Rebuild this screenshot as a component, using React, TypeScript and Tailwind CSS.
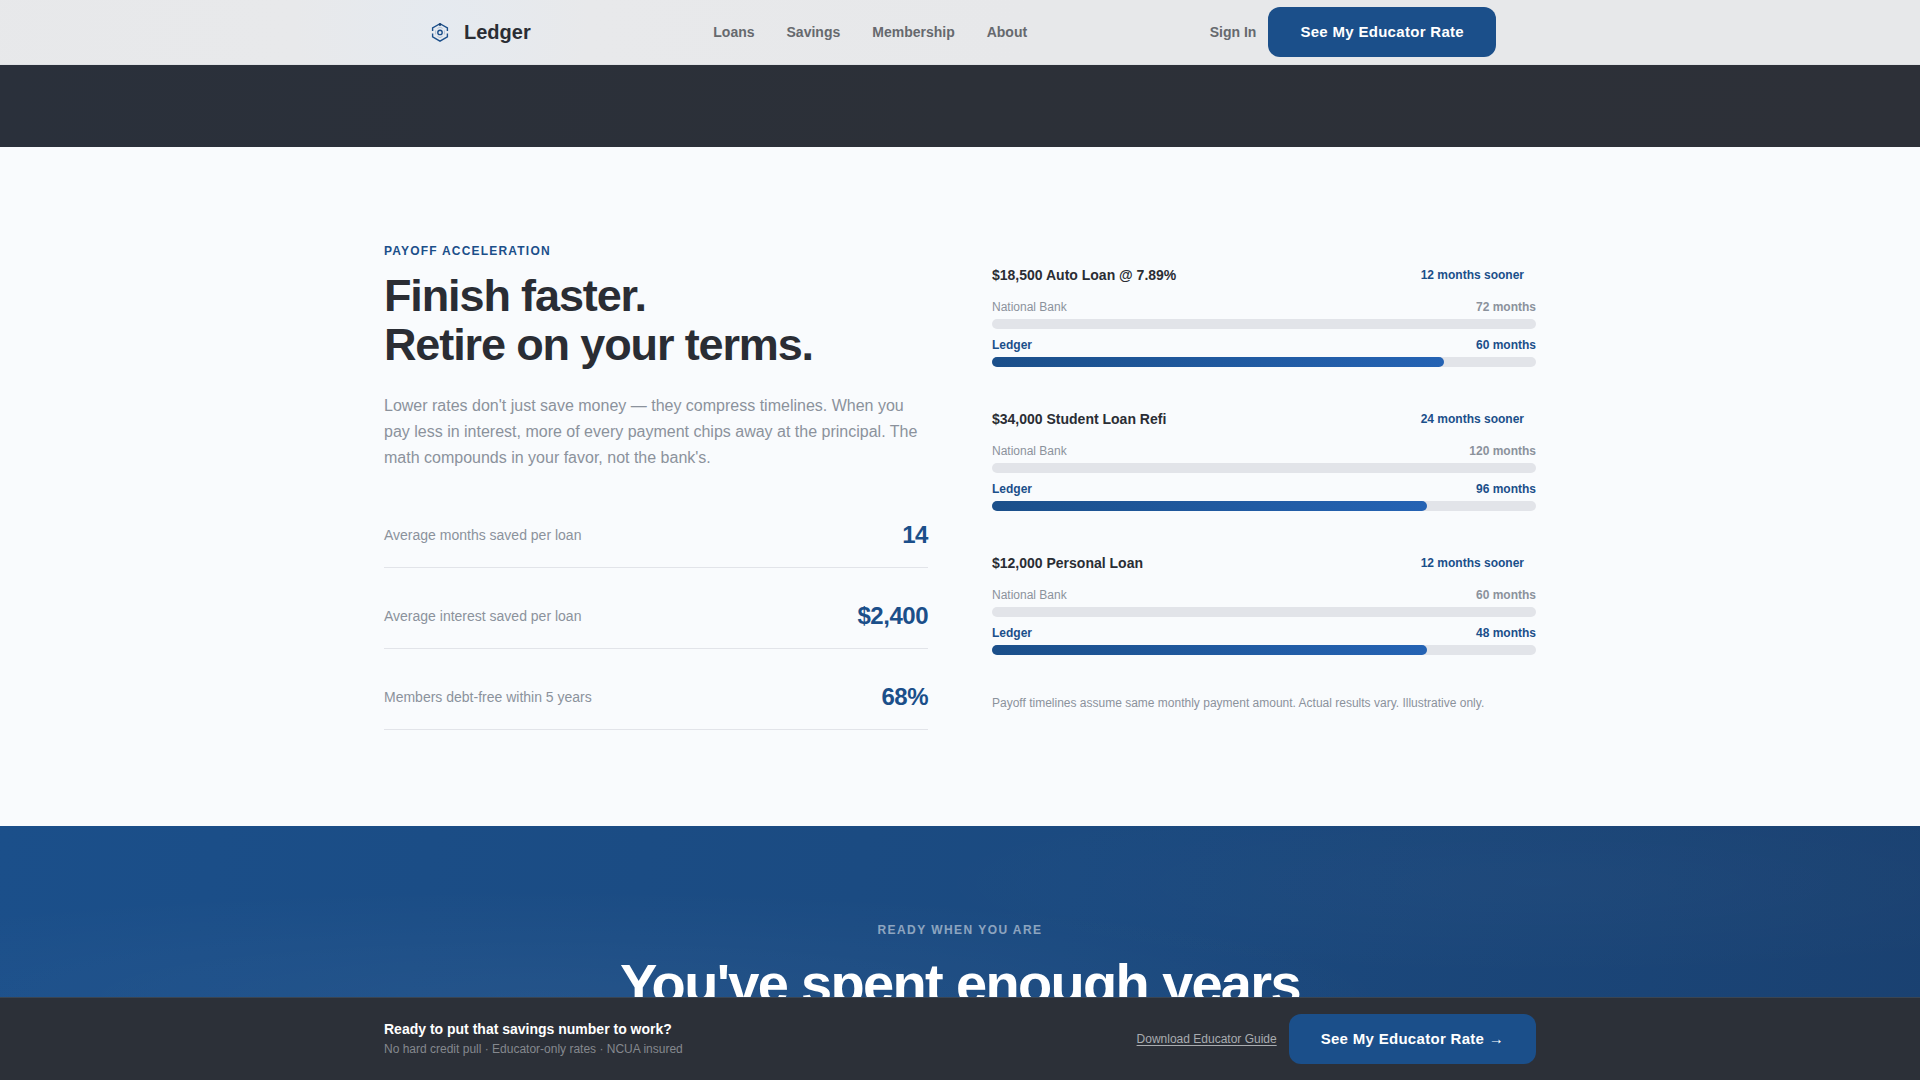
import React from "react";

const navLinks = ["Loans", "Savings", "Membership", "About"];

const stats = [
  { label: "Average months saved per loan", value: "14" },
  { label: "Average interest saved per loan", value: "$2,400" },
  { label: "Members debt-free within 5 years", value: "68%" },
];

const loans = [
  { title: "$18,500 Auto Loan @ 7.89%", sooner: 12, bank: 72, ledger: 60 },
  { title: "$34,000 Student Loan Refi", sooner: 24, bank: 120, ledger: 96 },
  { title: "$12,000 Personal Loan", sooner: 12, bank: 60, ledger: 48 },
];

function Logo() {
  return (
    <svg className="size-8" viewBox="0 0 32 32" fill="none" aria-hidden="true">
      <g stroke="#1b4f8a" strokeWidth="1.4">
        <path d="M8.6 15v-3.2L16 7.7l7.4 4.1V15" />
        <path d="M8.6 17.6v3.2l7.4 4.4 7.4-4.4v-3.2" />
        <circle cx="16" cy="16.4" r="2.2" />
      </g>
      <circle cx="16" cy="8.6" r="1.3" fill="#1a406e" />
      <path d="M11.6 14.4v4M20.4 14.4v4M13.4 12.4l2.6-1.3 2.6 1.3M13.4 20.4l2.6 1.3 2.6-1.3" stroke="#1b4f8a" strokeOpacity="0.25" />
    </svg>
  );
}

function Header() {
  return (
    <header className="shrink-0 border-b border-[#dfe1e4] bg-[#e7e8ea] bg-[radial-gradient(circle_at_23%_40%,#e5eaf0_0%,#e8e9eb_10%,#e7e8ea_40%)]">
      <div className="mx-auto flex h-16 max-w-[1072px] items-center justify-between">
        <a href="#" className="flex items-center gap-2 text-xl font-bold text-[#2a2d34]">
          <Logo />
          Ledger
        </a>
        <nav className="flex gap-8 text-sm font-semibold text-[#66696e]">
          {navLinks.map((l) => (
            <a key={l} href="#">{l}</a>
          ))}
        </nav>
        <div className="flex items-center gap-3">
          <a href="#" className="text-sm font-semibold text-[#66696e]">Sign In</a>
          <button className="h-[50px] rounded-xl bg-[#1b4f8a] px-8 text-[15px] font-bold tracking-[0.02em] text-white">
            See My Educator Rate
          </button>
        </div>
      </div>
    </header>
  );
}

function LoanRow({ title, sooner, bank, ledger }: (typeof loans)[number]) {
  return (
    <article>
      <div className="mb-3 flex items-center justify-between">
        <h3 className="text-sm font-bold text-[#2a2d34]">{title}</h3>
        <span className="px-3 py-1 text-xs font-bold text-[#1b4f8a]">{sooner} months sooner</span>
      </div>
      <div className="mb-1 flex justify-between text-xs text-[#8b929c]">
        <span>National Bank</span>
        <span className="font-bold">{bank} months</span>
      </div>
      <div className="mb-2 h-2.5 rounded-full bg-[#e2e4e9]" />
      <div className="mb-1 flex justify-between text-xs font-bold text-[#1b4f8a]">
        <span>Ledger</span>
        <span>{ledger} months</span>
      </div>
      <div className="h-2.5 rounded-full bg-[#e2e4e9]">
        <div
          className="h-full rounded-full bg-linear-to-r from-[#1b4f8a] to-[#2563b4]"
          style={{ width: `${Math.round((ledger / bank) * 100)}%` }}
        />
      </div>
    </article>
  );
}

function Payoff() {
  return (
    <section className="bg-[#f9fbfd] py-24">
      <div className="mx-auto grid max-w-[1152px] grid-cols-2 items-center gap-16">
        <div>
          <p className="mb-3 text-xs font-bold tracking-[0.1em] text-[#1b4f8a] uppercase">Payoff Acceleration</p>
          <h2 className="mb-6 text-[45px] leading-[49px] font-bold tracking-[-0.025em] text-[#2a2d34]">
            Finish faster.
            <br />
            Retire on your terms.
          </h2>
          <p className="mb-12 text-base leading-[26px] text-[#8b929c]">
            Lower rates don't just save money — they compress timelines. When you pay less in interest, more of every
            payment chips away at the principal. The math compounds in your favor, not the bank's.
          </p>
          <dl className="flex flex-col gap-8">
            {stats.map((s) => (
              <div key={s.label} className="flex items-center justify-between border-b border-[#e2e4e9] pb-4">
                <dt className="text-sm text-[#8b929c]">{s.label}</dt>
                <dd className="text-2xl font-bold tracking-[-0.02em] text-[#1b4f8a]">{s.value}</dd>
              </div>
            ))}
          </dl>
        </div>
        <div className="flex flex-col gap-10">
          {loans.map((l) => (
            <LoanRow key={l.title} {...l} />
          ))}
          <p className="text-xs text-[#8b929c]">
            Payoff timelines assume same monthly payment amount. Actual results vary. Illustrative only.
          </p>
        </div>
      </div>
    </section>
  );
}

function CallToAction() {
  return (
    <section className="bg-[radial-gradient(ellipse_at_28%_60%,rgba(255,255,255,0.04),transparent_45%),radial-gradient(ellipse_at_80%_20%,rgba(255,255,255,0.02),transparent_30%),linear-gradient(100deg,#1b4f8a_0%,#1b4a80_55%,#1a4171_100%)] py-24 text-center">
      <p className="mb-4 text-xs font-bold tracking-[0.12em] text-white/50 uppercase">Ready when you are</p>
      <h2 className="text-[56px] leading-[60px] font-bold tracking-[-0.03em] text-white">You've spent enough years</h2>
    </section>
  );
}

function StickyBar() {
  return (
    <footer className="shrink-0 border-t border-[#3a4552] bg-[#2c3038] py-4">
      <div className="mx-auto flex max-w-[1152px] items-center justify-between">
        <div>
          <p className="text-sm font-bold text-white">Ready to put that savings number to work?</p>
          <p className="text-xs leading-5 text-[#85888e]">No hard credit pull · Educator-only rates · NCUA insured</p>
        </div>
        <div className="flex items-center gap-3">
          <a href="#" className="text-xs text-[#a9acb0] underline underline-offset-2">Download Educator Guide</a>
          <button className="h-[50px] rounded-xl bg-[#1b4f8a] px-8 text-[15px] font-bold tracking-[0.02em] text-white">
            See My Educator Rate →
          </button>
        </div>
      </div>
    </footer>
  );
}

export default function App() {
  return (
    <div className="flex h-screen flex-col font-['Liberation_Sans',Arial,sans-serif]">
      <Header />
      <main className="min-h-0 flex-1 overflow-hidden">
        <div className="h-[82px] bg-linear-to-r from-[#2a303b] via-[#2c3038] to-[#2d3038]" />
        <Payoff />
        <CallToAction />
      </main>
      <StickyBar />
    </div>
  );
}
